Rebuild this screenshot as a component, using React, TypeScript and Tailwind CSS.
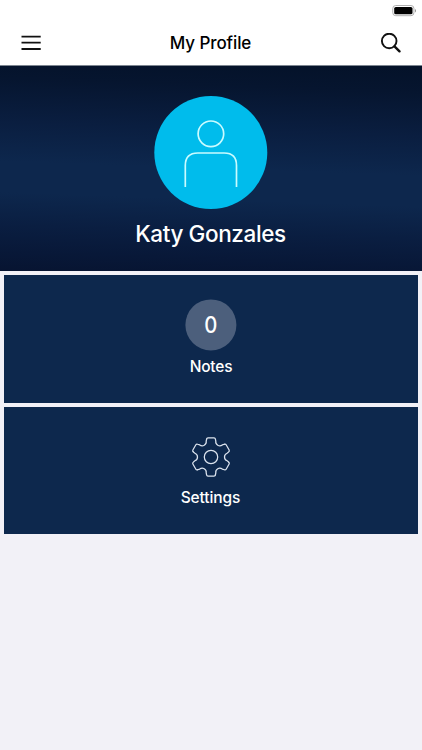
const SECTORS = [0, 60, 120, 180, 240, 300];

function StatusBar() {
  return (
    <div className="flex h-5 items-start justify-end pt-[5px] pr-[5px]">
      <svg width="25" height="12" viewBox="0 0 25 12" fill="none">
        <rect x="0.75" y="0.5" width="21.2" height="10.2" rx="3" stroke="#b0b0b0" />
        <rect x="2.2" y="1.9" width="18.3" height="7.4" rx="1.6" fill="#000" />
        <path d="M23.2 4c1.1.4 1.1 3.1 0 3.5z" fill="#777" />
      </svg>
    </div>
  );
}

function Header() {
  return (
    <header className="h-[66px] border-b border-[#7c8590] bg-white text-black">
      <StatusBar />
      <nav className="flex h-[45px] items-center justify-between px-[21px]">
        <button type="button" aria-label="Menu">
          <svg width="20" height="16" viewBox="0 0 20 16" fill="none" stroke="#111" strokeWidth="1.8">
            <path d="M.5 1.6h19.2M.5 7.7h19.2M.5 14h19.2" />
          </svg>
        </button>
        <h1 className="pt-0.5 text-[17px] font-medium tracking-[-0.1px]">My Profile</h1>
        <button type="button" aria-label="Search">
          <svg width="21" height="20" viewBox="0 0 21 20" fill="none" stroke="#111">
            <circle cx="9.2" cy="8" r="7.3" strokeWidth="1.9" />
            <path d="M14.5 13.3l5 5" strokeWidth="2.4" strokeLinecap="round" />
          </svg>
        </button>
      </nav>
    </header>
  );
}

function Avatar() {
  return (
    <div className="mr-px flex h-[113px] w-[113px] translate-x-[0.3px] items-center justify-center rounded-full bg-[#00bcec]">
      <svg width="113" height="113" viewBox="0 0 113 113" fill="none" stroke="#c9fbff" strokeWidth="1.7">
        <circle cx="56.6" cy="37.8" r="12.8" />
        <path d="M31 91V69.5Q31 57 43.5 57H70Q82.2 57 82.2 69.5V91" />
      </svg>
    </div>
  );
}

function GearIcon() {
  return (
    <svg width="40" height="40" viewBox="-20 -20 40 40" fill="none" stroke="#dbe3ee" strokeWidth="1.25" strokeLinejoin="round" strokeLinecap="round">
      <circle r="6.7" />
      {SECTORS.map((angle) => (
        <path
          key={angle}
          transform={`rotate(${angle})`}
          d="M-4.4-17.9Q-4.2-19.2-3-19.2H3Q4.2-19.2 4.4-17.9L4.8-15.8A4 4 0 0 0 11.28-12.06L13.3-12.76"
        />
      ))}
    </svg>
  );
}

export default function App() {
  return (
    <div className="min-h-screen bg-[#f2f1f7] font-['Inter',sans-serif] text-white">
      <Header />
      <section className="flex h-[205px] flex-col items-center bg-[linear-gradient(182deg,#041229_0%,#06152f_12%,#0a1e40_32%,#0d274d_50%,#0d274d_64%,#0a1e41_79%,#081838_91%,#071431_100%)] pt-[30px]">
        <Avatar />
        <h2 className="mt-[9px] mr-px text-[22.5px] leading-8 font-medium tracking-[-0.4px]">Katy Gonzales</h2>
      </section>
      <main className="flex flex-col gap-1 px-1 pt-1">
        <section className="flex h-[127.5px] flex-col items-center bg-[#0d284d] pt-6">
          <div className="mr-px flex h-[51px] w-[51px] translate-x-[0.4px] translate-y-[0.4px] items-center justify-center rounded-full bg-[#4c5f7c] text-[22.5px] font-medium">
            <span className="scale-x-90">0</span>
          </div>
          <h3 className="mt-[5px] text-[15.5px] leading-6 font-medium tracking-[-0.2px]">Notes</h3>
        </section>
        <section className="flex h-[127px] flex-col items-center bg-[#0d284d] pt-[30px]">
          <GearIcon />
          <h3 className="mt-[9px] mr-px text-[15.5px] leading-6 font-medium tracking-[-0.1px]">Settings</h3>
        </section>
      </main>
    </div>
  );
}
